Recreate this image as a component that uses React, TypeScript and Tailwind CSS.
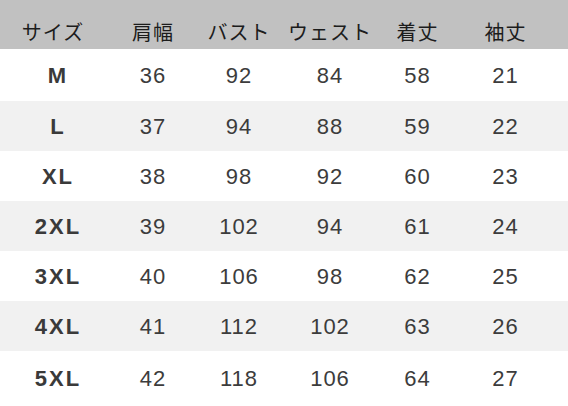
const headers = ["サイズ", "肩幅", "バスト", "ウェスト", "着丈", "袖丈"];

const rows: { size: string; values: number[] }[] = [
  { size: "M", values: [36, 92, 84, 58, 21] },
  { size: "L", values: [37, 94, 88, 59, 22] },
  { size: "XL", values: [38, 98, 92, 60, 23] },
  { size: "2XL", values: [39, 102, 94, 61, 24] },
  { size: "3XL", values: [40, 106, 98, 62, 25] },
  { size: "4XL", values: [41, 112, 102, 63, 26] },
  { size: "5XL", values: [42, 118, 106, 64, 27] },
];

const cols = "grid grid-cols-[114px_78px_94px_88px_87px_89px]";

export default function App() {
  return (
    <div className="w-[568px] h-[406px] overflow-hidden bg-white font-['Liberation_Sans','Noto_Sans_CJK_JP',sans-serif] text-[#333]">
      <div className={`${cols} h-[49px] bg-[#c1c1c1] items-center pt-[14px]`}>
        {headers.map((h, i) => (
          <div
            key={h}
            className={
              "text-center text-[20px] font-normal tracking-[1px] text-[#1c1c1c] font-['Noto_Sans_CJK_JP',sans-serif] " +
              (i === 0 ? "pr-[8px]" : "")
            }
          >
            {h}
          </div>
        ))}
      </div>
      {rows.map((r, i) => (
        <div
          key={r.size}
          className={`${cols} items-center ${i % 2 === 1 ? "bg-[#f1f1f1]" : "bg-white"} ${
            i === 0 ? "h-[52px]" : i === 6 ? "h-[54px]" : "h-[50px]"
          }`}
        >
          <div className="text-center text-[22px] font-bold tracking-[2px] text-[#3a3a3a] pl-[2px]">{r.size}</div>
          {r.values.map((v, j) => (
            <div key={j} className="text-center text-[22px] tracking-[1px] text-[#3c3c3c]">
              {v}
            </div>
          ))}
        </div>
      ))}
    </div>
  );
}
